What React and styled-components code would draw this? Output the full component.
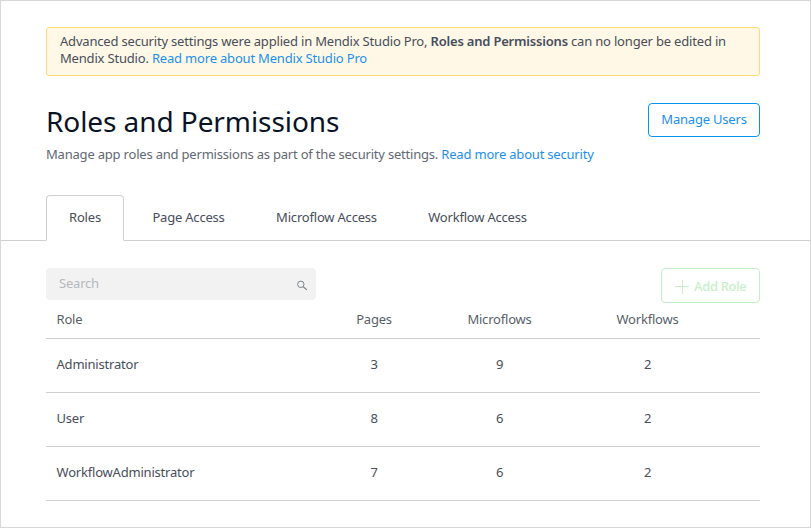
import React from 'react';
import styled, { createGlobalStyle } from 'styled-components';

const Global = createGlobalStyle`
  *, *::before, *::after { box-sizing: border-box; }
  body { margin: 0; background: #fff; }
`;

const Page = styled.main`
  width: 811px;
  height: 528px;
  border: 1px solid #d7d7d7;
  background: #fff;
  color: #474e5c;
  font: 13px/17px "Noto Sans", sans-serif;
  letter-spacing: -0.2px;
  overflow: hidden;
`;

const Notice = styled.div`
  margin: 26px 50px 0 45px;
  height: 49px;
  padding: 5px 13px;
  border: 1px solid #ffdb70;
  border-radius: 3px;
  background: #fff8e6;
  letter-spacing: -0.187px;
  white-space: nowrap;
`;

const Strong = styled.strong`
  font-weight: 600;
  letter-spacing: -0.2px;
`;

const Link = styled.a`
  color: #1c90ee;
  text-decoration: none;
`;

const Header = styled.header`
  display: flex;
  justify-content: space-between;
  align-items: flex-start;
  height: 92px;
  margin: 27px 50px 0 45px;
`;

const Title = styled.h1`
  margin: -1px 0 0;
  color: #0a1325;
  font-size: 28px;
  line-height: 38px;
  font-weight: 400;
  letter-spacing: -0.08px;
`;

const Subtitle = styled.p`
  margin: 6px 0 0;
  color: #626875;
`;

const ManageButton = styled.button`
  width: 112px;
  height: 34px;
  padding: 0 0 2px;
  border: 1px solid #0595f0;
  border-radius: 4px;
  background: #fff;
  color: #1c90ee;
  font: inherit;
  letter-spacing: inherit;
`;

const Tabs = styled.nav`
  display: flex;
  height: 46px;
  padding-left: 45px;
  border-bottom: 1px solid #ced0d3;
`;

const Tab = styled.button`
  width: ${(p) => p.$width}px;
  height: 46px;
  padding: 0 0 2px;
  border: 1px solid ${(p) => (p.$active ? '#ced0d3' : 'transparent')};
  border-bottom-color: ${(p) => (p.$active ? '#fff' : 'transparent')};
  border-radius: 4px 4px 0 0;
  background: ${(p) => (p.$active ? '#fff' : 'transparent')};
  color: inherit;
  font: inherit;
  letter-spacing: inherit;
`;

const Toolbar = styled.div`
  display: flex;
  justify-content: space-between;
  align-items: flex-start;
  height: 35px;
  margin: 27px 50px 0 45px;
`;

const SearchBox = styled.label`
  display: flex;
  align-items: center;
  width: 270px;
  height: 32px;
  padding: 0 8px 0 13px;
  border-radius: 4px;
  background: #f2f2f2;
`;

const SearchInput = styled.input`
  flex: 1;
  min-width: 0;
  padding: 0 0 2px;
  border: 0;
  outline: 0;
  background: transparent;
  color: inherit;
  font: inherit;
  letter-spacing: inherit;
  &::placeholder { color: #b6b8be; opacity: 1; }
`;

const SearchIcon = styled.svg`
  margin-top: 4px;
`;

const AddButton = styled.button`
  display: flex;
  align-items: center;
  gap: 5px;
  width: 99px;
  height: 35px;
  padding: 2px 0 0 13px;
  border: 1px solid #c2f0c4;
  border-radius: 4px;
  background: #fff;
  color: #c8efc9;
  font: inherit;
  font-weight: 500;
  letter-spacing: -0.33px;
`;

const Table = styled.table`
  width: 714px;
  margin-left: 45px;
  border-collapse: separate;
  border-spacing: 0;
  table-layout: fixed;
`;

const Cell = styled.td`
  height: ${(p) => (p.$head ? 36 : 54)}px;
  padding: ${(p) => (p.$first ? '0 0 2px 10.5px' : '0 0 2px')};
  border-bottom: 1px solid #ced0d3;
  color: ${(p) => (p.$head ? '#585f6c' : 'inherit')};
  text-align: ${(p) => (p.$first ? 'left' : 'center')};
  font-weight: 400;
`;

const tabs = [
  ['Roles', 78],
  ['Page Access', 129],
  ['Microflow Access', 147],
  ['Workflow Access', 155],
];

const roles = [
  ['Administrator', 3, 9, 2],
  ['User', 8, 6, 2],
  ['WorkflowAdministrator', 7, 6, 2],
];

export default function App() {
  return (
    <Page>
      <Global />
      <Notice>
        Advanced security settings were applied in Mendix Studio Pro, <Strong>Roles and Permissions</Strong> can no longer be edited in<br />
        Mendix Studio. <Link>Read more about Mendix Studio Pro</Link>
      </Notice>
      <Header>
        <div>
          <Title>Roles and Permissions</Title>
          <Subtitle>Manage app roles and permissions as part of the security settings. <Link>Read more about security</Link></Subtitle>
        </div>
        <ManageButton>Manage Users</ManageButton>
      </Header>
      <Tabs>
        {tabs.map(([name, width], i) => (
          <Tab key={name} $width={width} $active={i === 0}>{name}</Tab>
        ))}
      </Tabs>
      <Toolbar>
        <SearchBox>
          <SearchInput placeholder="Search" />
          <SearchIcon width="12" height="12" viewBox="0 0 12 12" fill="none" stroke="#7b818d">
            <circle cx="4.8" cy="4.3" r="3.2" />
            <path d="M7.2 6.7l3.7 3.2" strokeWidth="1.2" />
          </SearchIcon>
        </SearchBox>
        <AddButton>
          <svg width="14" height="14" viewBox="0 0 14 14" stroke="currentColor"><path d="M7.5 0v14M0 6.5h14" /></svg>
          Add Role
        </AddButton>
      </Toolbar>
      <Table>
        <colgroup><col width="265" /><col width="126" /><col width="125" /><col width="171" /><col /></colgroup>
        <thead>
          <tr>
            {['Role', 'Pages', 'Microflows', 'Workflows', ''].map((h, i) => (
              <Cell as="th" key={h} $head $first={i === 0}>{h}</Cell>
            ))}
          </tr>
        </thead>
        <tbody>
          {roles.map((r) => (
            <tr key={r[0]}>
              {r.map((v, i) => <Cell key={i} $first={i === 0}>{v}</Cell>)}
              <Cell />
            </tr>
          ))}
        </tbody>
      </Table>
    </Page>
  );
}
